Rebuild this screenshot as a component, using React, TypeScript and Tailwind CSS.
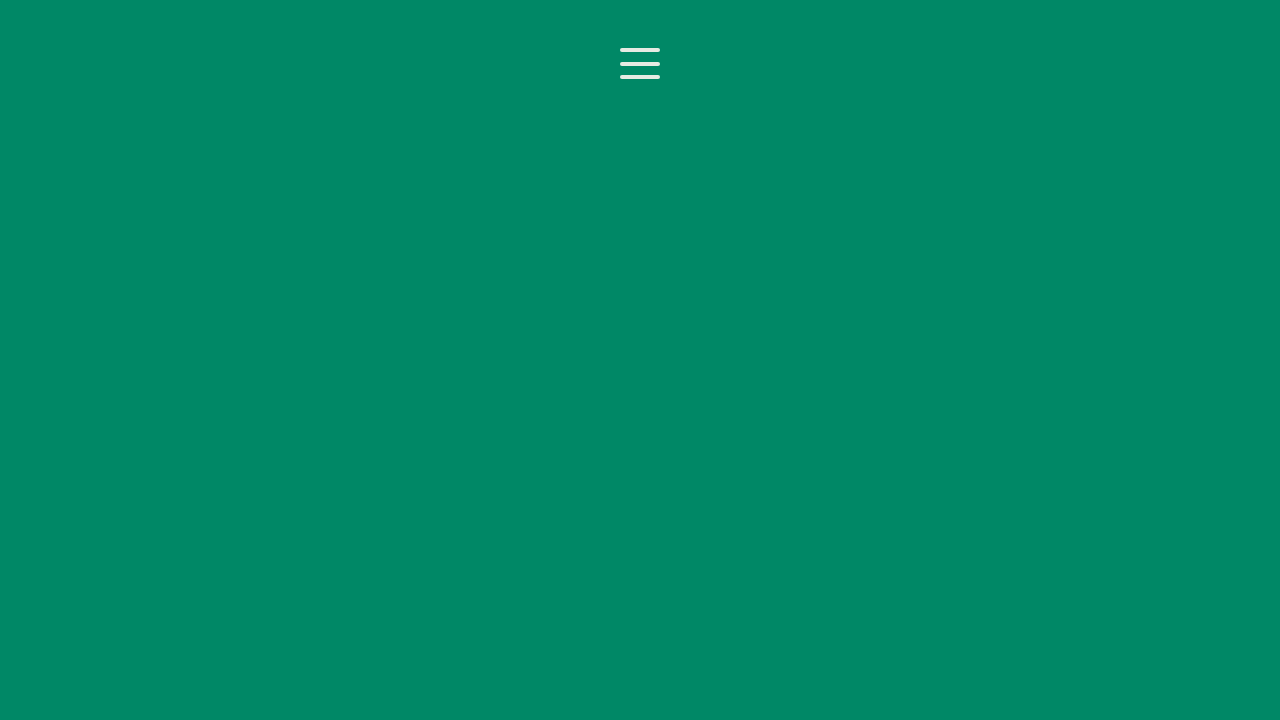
export default function App() {
  return (
    <div className="min-h-screen w-full bg-[#008866] flex flex-col items-center pt-12">
      <button aria-label="Open menu" className="flex flex-col gap-[9.5px] w-10">
        <span className="block h-1 w-10 rounded-full bg-[#e6ebe3]" />
        <span className="block h-1 w-10 rounded-full bg-[#e6ebe3]" />
        <span className="block h-1 w-10 rounded-full bg-[#e6ebe3]" />
      </button>
    </div>
  );
}
